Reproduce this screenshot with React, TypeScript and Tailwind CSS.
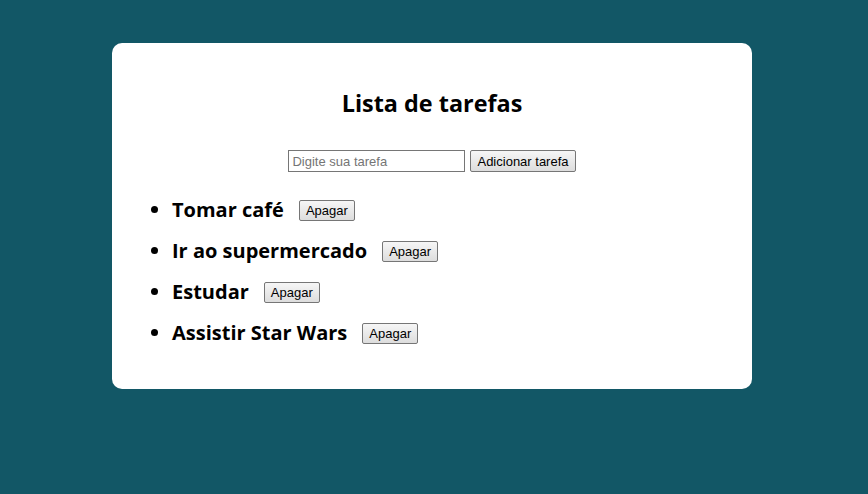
import { useState } from "react";

const btn =
  "h-[21px] px-[6px] border border-[#767676] rounded-[2px] bg-gradient-to-b from-[#f6f6f6] to-[#dddddd] text-[13px] font-normal leading-none text-black font-['Liberation_Sans',Arial,sans-serif]";

export default function App() {
  const [tasks, setTasks] = useState([
    "Tomar café",
    "Ir ao supermercado",
    "Estudar",
    "Assistir Star Wars",
  ]);
  const [text, setText] = useState("");

  const add = () => {
    if (!text.trim()) return;
    setTasks([...tasks, text.trim()]);
    setText("");
  };

  return (
    <div className="min-h-[494px] bg-[#125766] pt-[43px] font-['Open_Sans',sans-serif]">
      <div className="ml-[112px] w-[640px] rounded-[10px] bg-white px-5 pt-[42px] pb-[36px]">
        <h1 className="text-center text-[23.4px] font-bold leading-[36px] text-black">
          Lista de tarefas
        </h1>
        <div className="mt-[29px] flex justify-center gap-[5px]">
          <input
            value={text}
            onChange={(e) => setText(e.target.value)}
            placeholder="Digite sua tarefa"
            className="h-[22px] w-[177px] border border-[#767676] px-[3px] text-[13px] font-['Liberation_Sans',Arial,sans-serif] placeholder:text-[#757575] outline-none"
          />
          <button onClick={add} className={btn + " h-[22px]"}>
            Adicionar tarefa
          </button>
        </div>
        <ul className="mt-[17px] list-disc pl-[40px]">
          {tasks.map((t, i) => (
            <li key={i} className="h-[41px] text-[20px] font-bold leading-[41px] text-black">
              <div className="flex items-center">
                <span>{t}</span>
                <button
                  onClick={() => setTasks(tasks.filter((_, j) => j !== i))}
                  className={btn + " ml-[15px] mt-[2px]"}
                >
                  Apagar
                </button>
              </div>
            </li>
          ))}
        </ul>
      </div>
    </div>
  );
}
